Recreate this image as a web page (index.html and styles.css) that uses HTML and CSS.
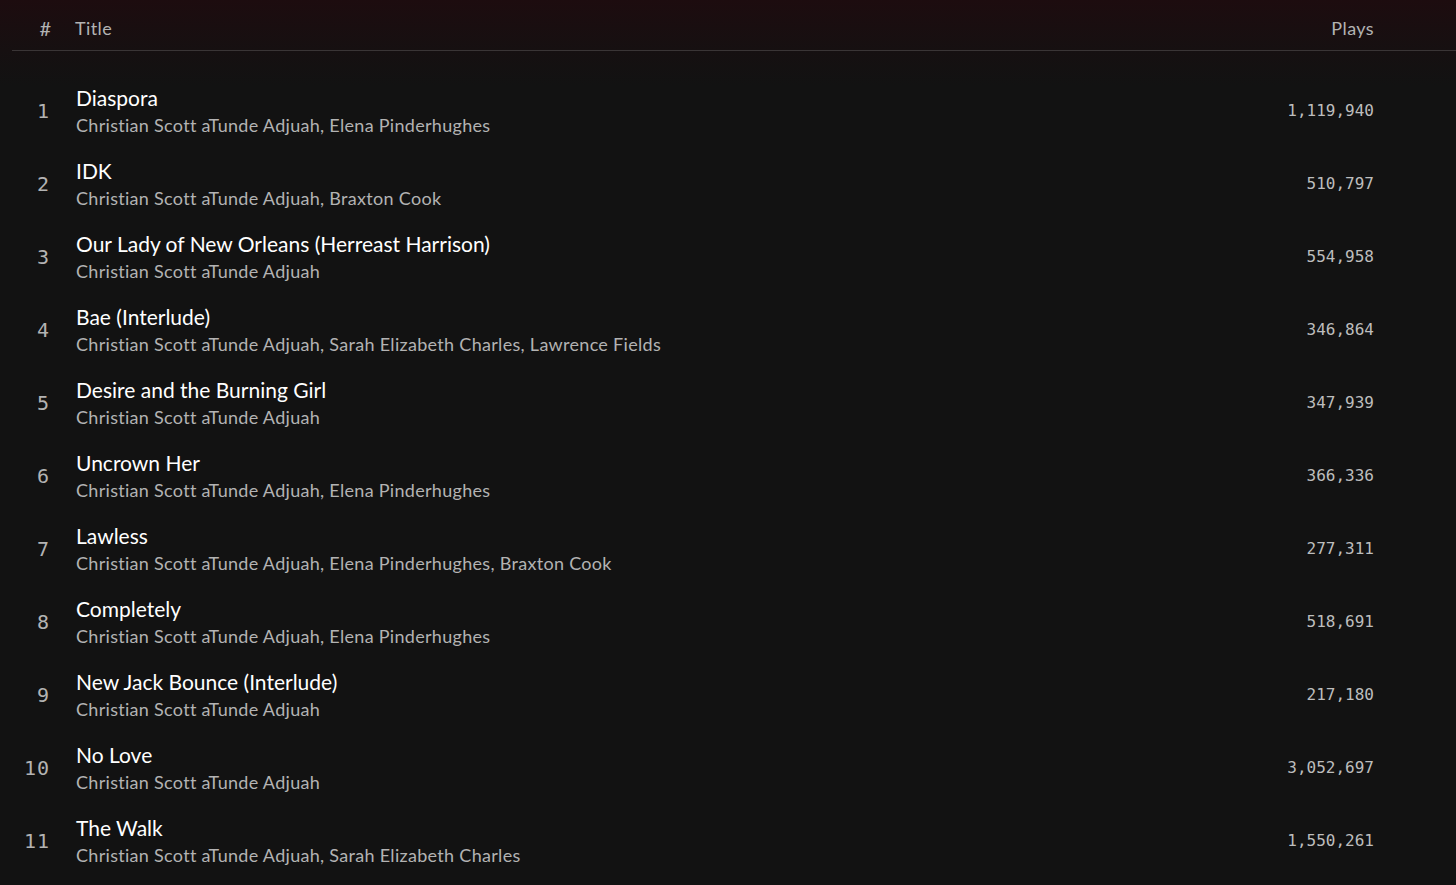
FILE: index.html
```html
<!DOCTYPE html>
<html>
<head>
<meta charset="utf-8">
<link rel="stylesheet" href="styles.css">
</head>
<body>
<div class="tracklist">
  <div class="head">
    <div class="idx">#</div>
    <div class="title-h">Title</div>
    <div class="plays-h">Plays</div>
  </div>
  <div class="rows">
    <div class="row"><div class="num">1</div><div class="info"><div class="name">Diaspora</div><div class="artist">Christian Scott aTunde Adjuah, Elena Pinderhughes</div></div><div class="plays">1,119,940</div></div>
    <div class="row"><div class="num">2</div><div class="info"><div class="name">IDK</div><div class="artist">Christian Scott aTunde Adjuah, Braxton Cook</div></div><div class="plays">510,797</div></div>
    <div class="row"><div class="num">3</div><div class="info"><div class="name">Our Lady of New Orleans (Herreast Harrison)</div><div class="artist">Christian Scott aTunde Adjuah</div></div><div class="plays">554,958</div></div>
    <div class="row"><div class="num">4</div><div class="info"><div class="name">Bae (Interlude)</div><div class="artist">Christian Scott aTunde Adjuah, Sarah Elizabeth Charles, Lawrence Fields</div></div><div class="plays">346,864</div></div>
    <div class="row"><div class="num">5</div><div class="info"><div class="name">Desire and the Burning Girl</div><div class="artist">Christian Scott aTunde Adjuah</div></div><div class="plays">347,939</div></div>
    <div class="row"><div class="num">6</div><div class="info"><div class="name">Uncrown Her</div><div class="artist">Christian Scott aTunde Adjuah, Elena Pinderhughes</div></div><div class="plays">366,336</div></div>
    <div class="row"><div class="num">7</div><div class="info"><div class="name">Lawless</div><div class="artist">Christian Scott aTunde Adjuah, Elena Pinderhughes, Braxton Cook</div></div><div class="plays">277,311</div></div>
    <div class="row"><div class="num">8</div><div class="info"><div class="name">Completely</div><div class="artist">Christian Scott aTunde Adjuah, Elena Pinderhughes</div></div><div class="plays">518,691</div></div>
    <div class="row"><div class="num">9</div><div class="info"><div class="name">New Jack Bounce (Interlude)</div><div class="artist">Christian Scott aTunde Adjuah</div></div><div class="plays">217,180</div></div>
    <div class="row"><div class="num">10</div><div class="info"><div class="name">No Love</div><div class="artist">Christian Scott aTunde Adjuah</div></div><div class="plays">3,052,697</div></div>
    <div class="row"><div class="num">11</div><div class="info"><div class="name">The Walk</div><div class="artist">Christian Scott aTunde Adjuah, Sarah Elizabeth Charles</div></div><div class="plays">1,550,261</div></div>
  </div>
</div>
</body>
</html>
```
FILE: styles.css
```css
html, body {
  margin: 0;
  padding: 0;
}
body {
  width: 1456px;
  height: 885px;
  overflow: hidden;
  background: linear-gradient(180deg, #1d0c0f 0px, #161011 50px, #121212 85px, #121212 100%);
  font-family: Lato, "Noto Sans", sans-serif;
  color: #fff;
}
.tracklist {
  padding-left: 12px;
}
.head {
  display: grid;
  grid-template-columns: 39px 1fr 200px;
  height: 51px;
  align-items: center;
  padding-top: 6px;
  border-bottom: 1px solid #3a3536;
  color: #b3b3b3;
  font-size: 18px;
  letter-spacing: 0.4px;
  padding-right: 82px;
  box-sizing: border-box;
}
.head .idx {
  text-align: right;
  font-size: 20px;
  letter-spacing: 0;
}
.head .title-h {
  padding-left: 24px;
}
.head .plays-h {
  text-align: right;
}
.rows {
  padding-top: 22px;
}
.row {
  display: grid;
  grid-template-columns: 38px 1fr 200px;
  height: 73px;
  align-items: center;
  padding-right: 82px;
}
.num {
  font-family: "DejaVu Sans Mono", monospace;
  font-size: 20px;
  letter-spacing: 1px;
  color: #b3b3b3;
  text-align: right;
  padding-top: 2px;
}
.info {
  padding-left: 26px;
  padding-top: 4px;
  display: flex;
  flex-direction: column;
}
.name {
  font-size: 21px;
  line-height: 26px;
  color: #fff;
}
.artist {
  font-size: 18px;
  letter-spacing: 0.3px;
  line-height: 28px;
  color: #b3b3b3;
}
.plays {
  font-family: "DejaVu Sans Mono", monospace;
  font-size: 16px;
  color: #bdbdbd;
  text-align: right;
  padding-top: 2px;
}
```
